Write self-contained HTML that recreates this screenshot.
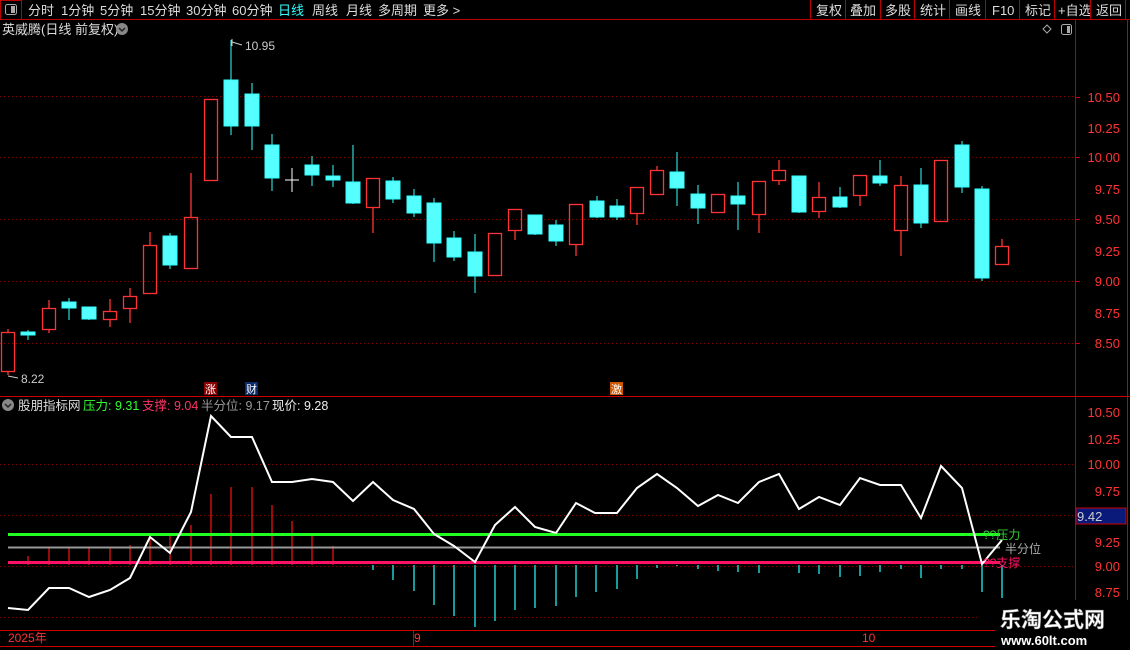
<!DOCTYPE html>
<html><head><meta charset="utf-8"><style>
html,body{margin:0;padding:0;background:#000;width:1130px;height:650px;overflow:hidden}
svg text{font-family:"Liberation Sans","Noto Sans CJK SC",sans-serif}
</style></head><body>
<svg width="1130" height="650" viewBox="0 0 1130 650" xmlns="http://www.w3.org/2000/svg">
<rect width="1130" height="650" fill="#000"/>
<line x1="0" y1="19.5" x2="1130" y2="19.5" stroke="#b00" stroke-width="1"/>
<rect x="0.5" y="0.5" width="21" height="19" fill="none" stroke="#b00"/>
<rect x="5.5" y="4.5" width="11" height="10" rx="2" fill="none" stroke="#aaa"/>
<rect x="11" y="6" width="4" height="7" fill="#aaa"/>
<g font-size="13" fill="#ddd">
<text x="28" y="15">分时</text><text x="61" y="15">1分钟</text><text x="100" y="15">5分钟</text><text x="140" y="15">15分钟</text><text x="186" y="15">30分钟</text><text x="232" y="15">60分钟</text>
<text x="278" y="15" fill="#3ff">日线</text><text x="312" y="15">周线</text><text x="346" y="15">月线</text><text x="378" y="15">多周期</text><text x="423" y="15">更多 &gt;</text>
<text x="816" y="15">复权</text><text x="850" y="15">叠加</text><text x="885" y="15">多股</text><text x="920" y="15">统计</text><text x="955" y="15">画线</text><text x="992" y="15">F10</text><text x="1025" y="15">标记</text><text x="1058" y="15">+自选</text><text x="1096" y="15">返回</text>
</g>
<g stroke="#b00"><line x1="810.5" y1="0" x2="810.5" y2="19"/><line x1="845.5" y1="0" x2="845.5" y2="19"/><line x1="880.5" y1="0" x2="880.5" y2="19"/><line x1="914.5" y1="0" x2="914.5" y2="19"/><line x1="949.5" y1="0" x2="949.5" y2="19"/><line x1="985.5" y1="0" x2="985.5" y2="19"/><line x1="1019.5" y1="0" x2="1019.5" y2="19"/><line x1="1054.5" y1="0" x2="1054.5" y2="19"/><line x1="1090.5" y1="0" x2="1090.5" y2="19"/><line x1="1125.5" y1="0" x2="1125.5" y2="19"/></g>
<text x="2" y="34" font-size="13" fill="#ddd">英威腾(日线 前复权)</text>
<circle cx="122" cy="29" r="6" fill="#888"/><path d="M119 28 L122 31 L125 28" stroke="#222" stroke-width="1.5" fill="none"/>
<path d="M1047 25 L1051 29 L1047 33 L1043 29 Z" fill="none" stroke="#aaa"/>
<rect x="1061.5" y="24.5" width="10" height="10" rx="2" fill="none" stroke="#aaa"/><rect x="1067" y="26" width="3" height="7" fill="#aaa"/>
<line x1="1075.5" y1="20" x2="1075.5" y2="646" stroke="#b00"/>
<line x1="0" y1="396.5" x2="1130" y2="396.5" stroke="#c00"/>
<line x1="0" y1="630.5" x2="1076" y2="630.5" stroke="#c00"/>
<line x1="0" y1="646.5" x2="1130" y2="646.5" stroke="#c00"/>
<line x1="413.5" y1="630" x2="413.5" y2="646" stroke="#c00"/>
<g stroke="#800" stroke-dasharray="1,3">
<line x1="0" y1="96.5" x2="1075" y2="96.5"/><line x1="0" y1="157.5" x2="1075" y2="157.5"/><line x1="0" y1="219.5" x2="1075" y2="219.5"/><line x1="0" y1="281.5" x2="1075" y2="281.5"/><line x1="0" y1="343.5" x2="1075" y2="343.5"/>
<line x1="0" y1="464.5" x2="1075" y2="464.5"/><line x1="0" y1="515.5" x2="1075" y2="515.5"/><line x1="0" y1="566.5" x2="1075" y2="566.5"/><line x1="0" y1="617.5" x2="980" y2="617.5"/>
</g>
<g font-size="13" fill="#f33" text-anchor="end">
<text x="1120" y="102">10.50</text><text x="1120" y="133">10.25</text><text x="1120" y="162">10.00</text><text x="1120" y="194">9.75</text><text x="1120" y="224">9.50</text><text x="1120" y="256">9.25</text><text x="1120" y="286">9.00</text><text x="1120" y="318">8.75</text><text x="1120" y="348">8.50</text>
<text x="1120" y="417">10.50</text><text x="1120" y="444">10.25</text><text x="1120" y="469">10.00</text><text x="1120" y="496">9.75</text><text x="1120" y="547">9.25</text><text x="1120" y="571">9.00</text><text x="1120" y="597">8.75</text>
</g>
<g stroke="#c00"><line x1="1075" y1="97.5" x2="1080" y2="97.5"/><line x1="1075" y1="157.5" x2="1080" y2="157.5"/><line x1="1075" y1="219.5" x2="1080" y2="219.5"/><line x1="1075" y1="281.5" x2="1080" y2="281.5"/><line x1="1075" y1="343.5" x2="1080" y2="343.5"/><line x1="1127.5" y1="20" x2="1127.5" y2="600"/></g>
<rect x="1076" y="508" width="50" height="16" fill="#0a1a7a" stroke="#c00"/>
<text x="1077" y="521" font-size="13" fill="#ccc">9.42</text>
<g stroke="#3ff" fill="#5ff">
<line x1="28" y1="330" x2="28" y2="340"/><rect x="21" y="332" width="14" height="3"/>
<line x1="69" y1="298" x2="69" y2="320"/><rect x="62" y="302" width="14" height="6"/>
<line x1="89" y1="307" x2="89" y2="320"/><rect x="82" y="307" width="14" height="12"/>
<line x1="170" y1="233" x2="170" y2="269"/><rect x="163" y="236" width="14" height="29"/>
<line x1="231" y1="40" x2="231" y2="135"/><rect x="224" y="80" width="14" height="46"/>
<line x1="252" y1="83" x2="252" y2="150"/><rect x="245" y="94" width="14" height="32"/>
<line x1="272" y1="134" x2="272" y2="191"/><rect x="265" y="145" width="14" height="33"/>
<line x1="312" y1="156" x2="312" y2="186"/><rect x="305" y="165" width="14" height="10"/>
<line x1="333" y1="165" x2="333" y2="187"/><rect x="326" y="176" width="14" height="4"/>
<line x1="353" y1="145" x2="353" y2="204"/><rect x="346" y="182" width="14" height="21"/>
<line x1="393" y1="177" x2="393" y2="203"/><rect x="386" y="181" width="14" height="18"/>
<line x1="414" y1="189" x2="414" y2="217"/><rect x="407" y="196" width="14" height="17"/>
<line x1="434" y1="198" x2="434" y2="262"/><rect x="427" y="203" width="14" height="40"/>
<line x1="454" y1="231" x2="454" y2="261"/><rect x="447" y="238" width="14" height="19"/>
<line x1="475" y1="234" x2="475" y2="293"/><rect x="468" y="252" width="14" height="24"/>
<line x1="535" y1="215" x2="535" y2="235"/><rect x="528" y="215" width="14" height="19"/>
<line x1="556" y1="220" x2="556" y2="246"/><rect x="549" y="225" width="14" height="16"/>
<line x1="597" y1="196" x2="597" y2="218"/><rect x="590" y="201" width="14" height="16"/>
<line x1="617" y1="199" x2="617" y2="220"/><rect x="610" y="206" width="14" height="11"/>
<line x1="677" y1="152" x2="677" y2="206"/><rect x="670" y="172" width="14" height="16"/>
<line x1="698" y1="185" x2="698" y2="224"/><rect x="691" y="194" width="14" height="14"/>
<line x1="738" y1="182" x2="738" y2="230"/><rect x="731" y="196" width="14" height="8"/>
<line x1="799" y1="176" x2="799" y2="213"/><rect x="792" y="176" width="14" height="36"/>
<line x1="840" y1="187" x2="840" y2="208"/><rect x="833" y="197" width="14" height="10"/>
<line x1="880" y1="160" x2="880" y2="186"/><rect x="873" y="176" width="14" height="7"/>
<line x1="921" y1="168" x2="921" y2="228"/><rect x="914" y="185" width="14" height="38"/>
<line x1="962" y1="141" x2="962" y2="193"/><rect x="955" y="145" width="14" height="42"/>
<line x1="982" y1="186" x2="982" y2="281"/><rect x="975" y="189" width="14" height="89"/>
</g>
<g stroke="#f33" fill="none" stroke-width="1.3">
<line x1="8" y1="329" x2="8" y2="332"/><line x1="8" y1="372" x2="8" y2="375"/><rect x="1.5" y="332.5" width="13" height="39"/>
<line x1="49" y1="300" x2="49" y2="308"/><line x1="49" y1="330" x2="49" y2="333"/><rect x="42.5" y="308.5" width="13" height="21"/>
<line x1="110" y1="299" x2="110" y2="311"/><line x1="110" y1="320" x2="110" y2="327"/><rect x="103.5" y="311.5" width="13" height="8"/>
<line x1="130" y1="288" x2="130" y2="296"/><line x1="130" y1="309" x2="130" y2="323"/><rect x="123.5" y="296.5" width="13" height="12"/>
<line x1="150" y1="232" x2="150" y2="245"/><rect x="143.5" y="245.5" width="13" height="48"/>
<line x1="191" y1="173" x2="191" y2="217"/><rect x="184.5" y="217.5" width="13" height="51"/>
<rect x="204.5" y="99.5" width="13" height="81"/>
<line x1="373" y1="208" x2="373" y2="233"/><rect x="366.5" y="178.5" width="13" height="29"/>
<rect x="488.5" y="233.5" width="13" height="42"/>
<line x1="515" y1="230" x2="515" y2="240"/><rect x="508.5" y="209.5" width="13" height="21"/>
<line x1="576" y1="245" x2="576" y2="256"/><rect x="569.5" y="204.5" width="13" height="40"/>
<line x1="637" y1="214" x2="637" y2="225"/><rect x="630.5" y="187.5" width="13" height="26"/>
<line x1="657" y1="166" x2="657" y2="170"/><rect x="650.5" y="170.5" width="13" height="24"/>
<rect x="711.5" y="194.5" width="13" height="18"/>
<line x1="759" y1="215" x2="759" y2="233"/><rect x="752.5" y="181.5" width="13" height="33"/>
<line x1="779" y1="160" x2="779" y2="170"/><line x1="779" y1="181" x2="779" y2="185"/><rect x="772.5" y="170.5" width="13" height="10"/>
<line x1="819" y1="182" x2="819" y2="197"/><line x1="819" y1="212" x2="819" y2="218"/><rect x="812.5" y="197.5" width="13" height="14"/>
<line x1="860" y1="196" x2="860" y2="206"/><rect x="853.5" y="175.5" width="13" height="20"/>
<line x1="901" y1="176" x2="901" y2="185"/><line x1="901" y1="231" x2="901" y2="256"/><rect x="894.5" y="185.5" width="13" height="45"/>
<rect x="934.5" y="160.5" width="13" height="61"/>
<line x1="1002" y1="239" x2="1002" y2="246"/><rect x="995.5" y="246.5" width="13" height="18"/>
</g>
<g stroke="#fff"><line x1="292" y1="168" x2="292" y2="192"/><line x1="285" y1="180" x2="299" y2="180"/></g>
<text x="245" y="50" font-size="12" fill="#ccc">10.95</text>
<path d="M232 39 L232 46 M232 42 L242 45" stroke="#ccc" fill="none"/>
<text x="21" y="383" font-size="12" fill="#ccc">8.22</text>
<path d="M8 376 L18 378" stroke="#ccc"/>
<rect x="204" y="382" width="13" height="13" fill="#800"/><text x="205" y="393" font-size="11" fill="#fff">涨</text>
<rect x="245" y="382" width="13" height="13" fill="#0a2a6a"/><text x="246" y="393" font-size="11" fill="#fff">财</text>
<rect x="610" y="382" width="13" height="13" fill="#c50"/><text x="611" y="393" font-size="11" fill="#fff">激</text>
<circle cx="8" cy="405" r="6" fill="#888"/><path d="M5 404 L8 407 L11 404" stroke="#222" stroke-width="1.5" fill="none"/>
<g font-size="12.5"><text x="18" y="410" fill="#ddd">股朋指标网</text><text x="83" y="410" fill="#3f3">压力: 9.31</text><text x="142" y="410" fill="#f36">支撑: 9.04</text><text x="201" y="410" fill="#999">半分位: 9.17</text><text x="272" y="410" fill="#eee">现价: 9.28</text></g>
<g stroke="#f11" stroke-width="1.2">
<line x1="28" y1="565" x2="28" y2="556"/><line x1="49" y1="565" x2="49" y2="548"/><line x1="69" y1="565" x2="69" y2="548"/><line x1="89" y1="565" x2="89" y2="548"/><line x1="110" y1="565" x2="110" y2="548"/><line x1="130" y1="565" x2="130" y2="545"/>
<line x1="150" y1="565" x2="150" y2="536"/><line x1="170" y1="565" x2="170" y2="536"/><line x1="191" y1="565" x2="191" y2="525"/><line x1="211" y1="565" x2="211" y2="494"/><line x1="231" y1="565" x2="231" y2="487"/><line x1="252" y1="565" x2="252" y2="487"/><line x1="272" y1="565" x2="272" y2="505"/><line x1="292" y1="565" x2="292" y2="521"/><line x1="312" y1="565" x2="312" y2="536"/><line x1="333" y1="565" x2="333" y2="546"/>
</g>
<g stroke="#2ee" stroke-width="1.3">
<line x1="373" y1="565" x2="373" y2="570"/><line x1="393" y1="565" x2="393" y2="580"/><line x1="414" y1="565" x2="414" y2="591"/><line x1="434" y1="565" x2="434" y2="605"/><line x1="454" y1="565" x2="454" y2="616"/><line x1="475" y1="565" x2="475" y2="627"/><line x1="495" y1="565" x2="495" y2="621"/><line x1="515" y1="565" x2="515" y2="610"/><line x1="535" y1="565" x2="535" y2="608"/>
<line x1="556" y1="565" x2="556" y2="606"/><line x1="576" y1="565" x2="576" y2="597"/><line x1="596" y1="565" x2="596" y2="592"/><line x1="617" y1="565" x2="617" y2="589"/><line x1="637" y1="565" x2="637" y2="579"/><line x1="657" y1="565" x2="657" y2="568"/><line x1="677" y1="565" x2="677" y2="566"/><line x1="698" y1="565" x2="698" y2="569"/><line x1="718" y1="565" x2="718" y2="571"/><line x1="738" y1="565" x2="738" y2="572"/><line x1="759" y1="565" x2="759" y2="573"/><line x1="799" y1="565" x2="799" y2="573"/><line x1="819" y1="565" x2="819" y2="574"/><line x1="840" y1="565" x2="840" y2="577"/><line x1="860" y1="565" x2="860" y2="576"/><line x1="880" y1="565" x2="880" y2="572"/><line x1="901" y1="565" x2="901" y2="569"/><line x1="921" y1="565" x2="921" y2="578"/><line x1="941" y1="565" x2="941" y2="569"/><line x1="962" y1="565" x2="962" y2="569"/><line x1="982" y1="565" x2="982" y2="592"/><line x1="1002" y1="565" x2="1002" y2="598"/>
</g>
<line x1="8" y1="534.5" x2="1000" y2="534.5" stroke="#2f2" stroke-width="3"/>
<line x1="8" y1="547.5" x2="1000" y2="547.5" stroke="#999" stroke-width="2"/>
<line x1="8" y1="562.5" x2="1000" y2="562.5" stroke="#f16" stroke-width="3"/>
<polyline fill="none" stroke="#fff" stroke-width="2" points="8,608 28,610 49,588 69,588 89,597 110,590 130,578 150,537 170,553 191,512 211,416 231,437 252,437 272,482 292,482 312,479 333,482 353,501 373,482 393,500 414,509 434,534 454,546 475,562 495,525 515,507 535,527 556,533 576,503 595,513 617,513 637,488 657,474 677,488 698,506 718,495 738,503 759,482 779,474 799,509 819,497 840,505 860,478 880,485 901,485 921,518 941,466 962,488 982,564 1002,540"/>
<text x="983" y="539" font-size="12" fill="#3c3">??压力</text>
<text x="1005" y="553" font-size="12" fill="#aaa">半分位</text>
<text x="983" y="567" font-size="12" fill="#f16">??支撑</text>
<text x="8" y="642" font-size="12" fill="#f33">2025年</text>
<text x="414" y="642" font-size="12" fill="#f33">9</text>
<text x="862" y="642" font-size="12" fill="#f33">10</text>
<rect x="995" y="600" width="135" height="50" fill="#000"/>
<text x="1000" y="627" font-size="21" font-weight="bold" fill="#fff" stroke="#888" stroke-width="0.5" font-family="Noto Serif CJK SC,serif">乐淘公式网</text>
<text x="1001" y="645" font-size="13" font-weight="bold" fill="#fff" font-family="Liberation Serif,serif">www.60lt.com</text>
</svg>
</body></html>
